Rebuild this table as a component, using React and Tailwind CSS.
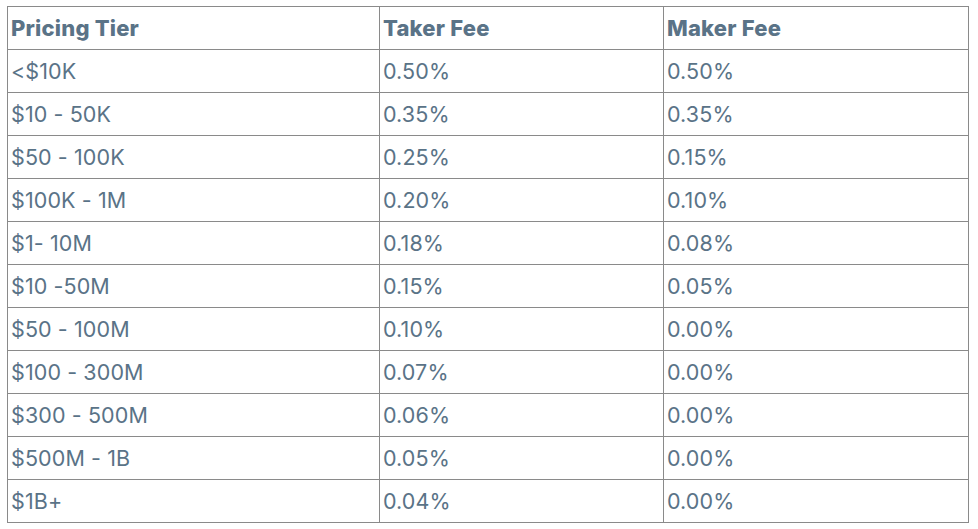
import React from 'react';

const rows = [
  ['<$10K', '0.50%', '0.50%'],
  ['$10 - 50K', '0.35%', '0.35%'],
  ['$50 - 100K', '0.25%', '0.15%'],
  ['$100K - 1M', '0.20%', '0.10%'],
  ['$1- 10M', '0.18%', '0.08%'],
  ['$10 -50M', '0.15%', '0.05%'],
  ['$50 - 100M', '0.10%', '0.00%'],
  ['$100 - 300M', '0.07%', '0.00%'],
  ['$300 - 500M', '0.06%', '0.00%'],
  ['$500M - 1B', '0.05%', '0.00%'],
  ['$1B+', '0.04%', '0.00%'],
];

export default function App() {
  return (
    <div className="bg-white w-[978px] h-[529px] pt-[6px] pl-[7px] text-[#5a7387]" style={{ fontFamily: 'Inter, "Liberation Sans", sans-serif' }}>
      <table className="border-collapse border border-[#2b2b2b] w-[961px] table-fixed">
        <colgroup>
          <col className="w-[372px]" />
          <col className="w-[284px]" />
          <col className="w-[305px]" />
        </colgroup>
        <thead>
          <tr className="h-[43px]">
            {['Pricing Tier', 'Taker Fee', 'Maker Fee'].map(h => (
              <th key={h} className="border border-[#8a8a8a] text-left font-extrabold text-[22px] pl-[3px] pt-[1px] tracking-[0.2px]">{h}</th>
            ))}
          </tr>
        </thead>
        <tbody>
          {rows.map(r => (
            <tr key={r[0]} className="h-[43px]">
              {r.map((c, i) => (
                <td key={i} className="border border-[#8a8a8a] text-[21.5px] pl-[3px] pt-[1px] tracking-[0.1px]">{c}</td>
              ))}
            </tr>
          ))}
        </tbody>
      </table>
    </div>
  );
}
